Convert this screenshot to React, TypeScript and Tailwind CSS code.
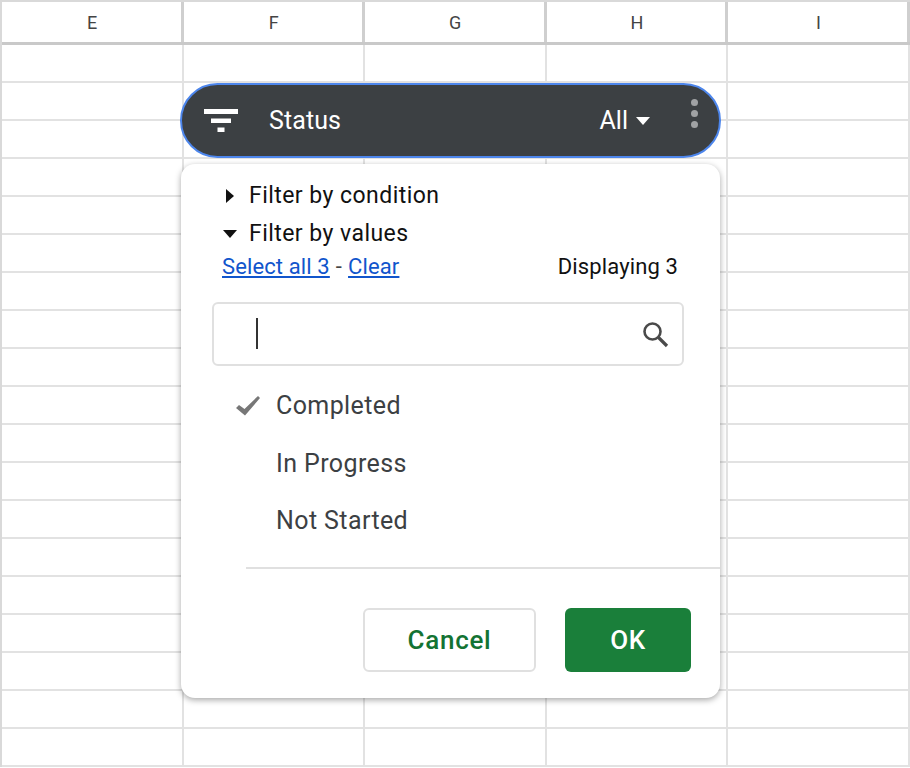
const columns = ['E', 'F', 'G', 'H', 'I'];
const rows = Array.from({ length: 19 }, (_, i) => i);
const values = ['Completed', 'In Progress', 'Not Started'];

function FilterIcon() {
  return (
    <svg width="34" height="23" viewBox="0 0 34 23" fill="#fff">
      <rect x="0" y="0" width="34" height="5" />
      <rect x="7" y="9.5" width="20" height="4.5" />
      <rect x="13.5" y="18.5" width="7" height="4.5" />
    </svg>
  );
}

function SearchIcon() {
  return (
    <svg width="28" height="28" viewBox="0 0 28 28" fill="none" stroke="#4a4a4a" strokeWidth="2.6">
      <circle cx="11.5" cy="11.5" r="8" />
      <path d="M17.5 17.5 L26 26" strokeWidth="3.2" />
    </svg>
  );
}

function CheckMark() {
  return (
    <svg width="24" height="20" viewBox="0 0 24 20" fill="#777">
      <path d="M0 12 L3 9 L8.5 13 L22 0 L24 2 L9 19.5 Z" />
    </svg>
  );
}

function Sheet() {
  return (
    <div className="border-l-2 border-t-2 border-[#d9d9d9]">
      <div className="flex h-[40px] border-b-[3px] border-[#c9c9c9] box-content">
        {columns.map((c) => (
          <div
            key={c}
            className="w-[181.6px] shrink-0 pl-[2px] flex items-center justify-center border-r-[3px] border-[#cfcfcf] text-[18px] tracking-[0.5px] text-[#444]"
          >
            {c}
          </div>
        ))}
      </div>
      {rows.map((r) => (
        <div key={r} className="flex h-[38px] border-b-2 border-[#e2e2e2]">
          {columns.map((c) => (
            <div key={c} className="w-[181.6px] shrink-0 border-r-2 border-[#e2e2e2]" />
          ))}
        </div>
      ))}
    </div>
  );
}

export default function App() {
  return (
    <div className="relative w-[910px] h-[768px] overflow-hidden bg-white font-['Roboto',sans-serif]">
      <Sheet />
      <div className="absolute left-[180px] top-[83px] w-[541px]">
        <div className="h-[75px] rounded-full bg-[#3c4043] border-2 border-[#4d86ec] flex items-center pl-[22px] pr-[21px] text-white">
          <FilterIcon />
          <span className="ml-[31px] text-[25px] tracking-[0.1px]">Status</span>
          <span className="ml-auto text-[25px]">All</span>
          <svg width="14" height="8" viewBox="0 0 14 8" className="ml-[8px] mt-[1px]" fill="#fff">
            <path d="M0 0 H14 L7 8 Z" />
          </svg>
          <div className="ml-[41px] mb-[15px] flex flex-col gap-[4px]">
            <span className="w-[7px] h-[7px] rounded-full bg-[#a0a2a4]" />
            <span className="w-[7px] h-[7px] rounded-full bg-[#a0a2a4]" />
            <span className="w-[7px] h-[7px] rounded-full bg-[#a0a2a4]" />
          </div>
        </div>

        <div className="mt-[6px] mx-[1px] h-[534px] rounded-[14px] bg-white shadow-[0_2px_6px_rgba(0,0,0,0.35)] flex flex-col">
          <div className="pt-[17px] pl-[42px] pr-[42px]">
            <div className="flex items-center h-[30px] text-[23px] tracking-[0.45px] text-[#111]">
              <svg width="14" height="14" viewBox="0 0 14 14" className="mr-[12px]" fill="#111">
                <path d="M3 0 L11 7 L3 14 Z" />
              </svg>
              <span>Filter by condition</span>
            </div>
            <div className="flex items-center h-[30px] mt-[8px] text-[23px] tracking-[0.45px] text-[#111]">
              <svg width="14" height="14" viewBox="0 0 14 14" className="mr-[12px]" fill="#111">
                <path d="M0 3 H14 L7 11 Z" />
              </svg>
              <span>Filter by values</span>
            </div>
            <div className="flex items-center h-[26px] mt-[4px] -ml-[1px] text-[22px] tracking-[0.12px] text-[#111]">
              <span className="underline text-[#1155cc]">Select all 3</span>
              <span className="mx-[6px] text-[#444]">-</span>
              <span className="underline text-[#1155cc]">Clear</span>
              <span className="ml-auto">Displaying 3</span>
            </div>
          </div>

          <div className="mt-[23px] ml-[31px] w-[472px] h-[64px] rounded-[6px] border-2 border-[#e0e0e0] flex items-center pl-[42px] pr-[13px]">
            <div className="w-[2px] h-[31px] bg-[#333] -mt-[2px]" />
            <div className="ml-auto">
              <SearchIcon />
            </div>
          </div>

          <div className="mt-[11px] flex flex-col">
            {values.map((v, i) => (
              <div key={v} className="h-[57.5px] flex items-center text-[25px] tracking-[0.4px] text-[#3c4043]">
                <div className="w-[40px] ml-[55px] shrink-0">{i === 0 && <CheckMark />}</div>
                <span>{v}</span>
              </div>
            ))}
          </div>

          <div className="mt-[17px] ml-[65px] h-[2px] bg-[#e0e0e0]" />

          <div className="mt-[39px] flex justify-end gap-[29px] pr-[29px]">
            <button className="w-[173px] h-[64px] pt-[1px] rounded-[6px] border-2 border-[#e0e0e0] bg-white text-[#137333] text-[26px] tracking-[0.7px] font-medium">
              Cancel
            </button>
            <button className="w-[126px] h-[64px] pt-[1px] rounded-[6px] bg-[#1a7f3a] text-white text-[26px] tracking-[0.7px] font-medium">
              OK
            </button>
          </div>
        </div>
      </div>
    </div>
  );
}
